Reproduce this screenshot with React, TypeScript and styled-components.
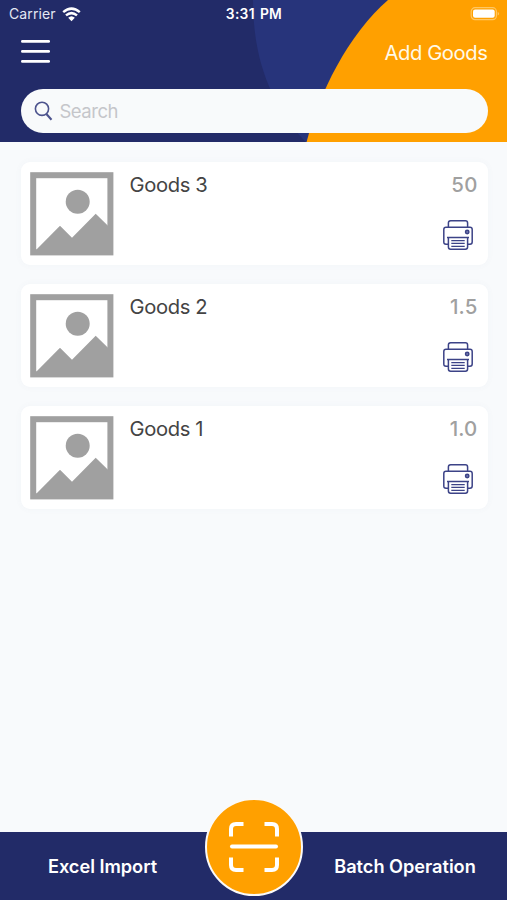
import React from "react";
import styled, { createGlobalStyle } from "styled-components";

const NAVY = "#222b68";
const ORANGE = "#ffa000";

const GlobalStyle = createGlobalStyle`
  * { box-sizing: border-box; }
  body { margin: 0; background: #f8fafc; font-family: Inter, "Liberation Sans", sans-serif; }
  button { font: inherit; border: 0; padding: 0; background: none; color: inherit; display: block; }
`;

const Screen = styled.div`
  width: 507px;
  height: 900px;
  display: flex;
  flex-direction: column;
  background: #f8fafc;
  overflow: hidden;
`;

const Header = styled.header`
  position: relative;
  height: 142.3px;
  flex: none;
  background: ${NAVY};
  color: #fff;
`;

const Backdrop = styled.svg`
  position: absolute;
  inset: 0;
  width: 100%;
  height: 100%;
`;

const HeaderContent = styled.div`
  position: relative;
  display: flex;
  flex-direction: column;
`;

const StatusBar = styled.div`
  height: 28px;
  padding: 0 7px 0 9px;
  display: grid;
  grid-template-columns: 1fr auto 1fr;
  align-items: center;
  font-size: 14px;
  line-height: 28px;
`;

const Carrier = styled.div`
  display: flex;
  align-items: center;
  gap: 6px;
  color: #e4e7f3;
  letter-spacing: 0.12px;
`;

const Clock = styled.div`
  font-weight: 600;
  font-size: 13.8px;
  letter-spacing: 0.3px;
  word-spacing: 1.3px;
  margin-left: -1px;
`;

const Battery = styled.svg`
  justify-self: end;
`;

const TitleBar = styled.div`
  height: 61px;
  padding: 0 19.5px 12px 20.5px;
  display: flex;
  align-items: center;
  justify-content: space-between;
`;

const MenuButton = styled.button`
  margin-top: 1px;
`;

const AddButton = styled.button`
  font-size: 20.2px;
  line-height: 24px;
  letter-spacing: -0.4px;
  color: #fff9e9;
`;

const SearchField = styled.div`
  height: 44px;
  margin: 0 19.5px 0 20.5px;
  padding-left: 13px;
  border-radius: 22px;
  background: #f8fafb;
  display: flex;
  align-items: center;
  gap: 7px;
  color: #c5c6ca;
  font-size: 18.5px;
  letter-spacing: -0.5px;
`;

const GoodsList = styled.main`
  flex: 1;
  padding: 19.5px 19.5px 0 20.5px;
  display: flex;
  flex-direction: column;
  gap: 19.3px;
`;

const Card = styled.article`
  height: 102.8px;
  padding: 10px 10px 10px 9.5px;
  display: flex;
  border-radius: 9px;
  background: #fff;
  box-shadow: 0 0 7px rgba(90, 110, 140, 0.045);
`;

const GoodsName = styled.div`
  margin-left: 15.5px;
  flex: 1;
  font-size: 20.2px;
  line-height: 26px;
  letter-spacing: -0.36px;
  color: #444;
`;

const CardAside = styled.div`
  display: flex;
  flex-direction: column;
  align-items: flex-end;
`;

const Quantity = styled.div`
  font-size: 20.4px;
  line-height: 26px;
  font-weight: 500;
  letter-spacing: 0.2px;
  color: #a0a0a0;
`;

const PrintButton = styled.button`
  margin: 22.5px 5px 0 0;
`;

const Footer = styled.footer`
  height: 68.5px;
  flex: none;
  background: ${NAVY};
  color: #fff;
  display: grid;
  grid-template-columns: 205px 98px 1fr;
  justify-items: center;
`;

const FooterAction = styled.button`
  height: 68px;
  padding-top: 1px;
  font-size: 18.2px;
  font-weight: 600;
  letter-spacing: -0.03px;
`;

const ScanButton = styled.button`
  width: 98px;
  height: 98px;
  margin-top: -34px;
  border: 2px solid #fafafa;
  border-radius: 50%;
  background: ${ORANGE};
  display: grid;
  place-items: center;
`;

const WifiIcon = () => (
  <svg width="19" height="15" viewBox="0 0 19 15" fill="none" stroke="#fff" strokeWidth="2.5">
    <path d="M1.2 5.1Q9.5-1.9 17.8 5.1M4 8.4Q9.5 3.8 15 8.4" />
    <path d="M6.2 10.8Q9.5 7.8 12.8 10.8L9.5 14.2Z" fill="#fff" stroke="none" />
  </svg>
);

const BatteryIcon = () => (
  <Battery width="30" height="14" viewBox="0 0 30 14">
    <rect x="1.2" y="0.7" width="25.2" height="11.9" rx="3.8" fill="none" stroke="#ffc763" strokeWidth="1.2" />
    <rect x="3" y="2.5" width="21.7" height="8.3" rx="2.1" fill="#fff" />
    <path d="M27.7 4.7Q30.5 6.6 27.7 8.6Z" fill="#ffc763" />
  </Battery>
);

const MenuIcon = () => (
  <svg width="29" height="25" viewBox="0 0 29 25" stroke="#fff" strokeWidth="2.8" strokeLinecap="round">
    <path d="M1.4 2.4H27.7M1.4 12.4H27.7M1.4 22.4H27.7" />
  </svg>
);

const SearchIcon = () => (
  <svg width="19" height="20" viewBox="0 0 19 20" fill="none" stroke="#4c538d" strokeWidth="1.6">
    <circle cx="8" cy="7.8" r="6.6" />
    <path d="M12.4 13L17.5 18.8" strokeWidth="2.1" />
  </svg>
);

const Placeholder = () => (
  <svg width="84" height="84" viewBox="0 0 84 84">
    <rect x="3.2" y="3.2" width="77.2" height="77.2" fill="#fff" stroke="#a0a0a0" strokeWidth="6" />
    <circle cx="47.7" cy="29.8" r="12" fill="#a0a0a0" />
    <path d="M5 79L30 53.8L42 65.7L65.7 41.8L79 54.8V82H5Z" fill="#a0a0a0" />
  </svg>
);

const PrinterIcon = () => (
  <svg width="30" height="30" viewBox="0 0 30 30" fill="none" stroke="#3c4387" strokeWidth="1.5" strokeLinejoin="round">
    <path d="M5.4 7.2V3Q5.4.8 7.6.8H22.4Q24.6.8 24.6 3V7.2" />
    <path d="M5.3 24.2H3Q.8 24.2.8 22V9.5Q.8 7.3 3 7.3H27Q29.2 7.3 29.2 9.5V22Q29.2 24.2 27 24.2H24.7" />
    <path d="M4 17.5H26M5.4 17.5V27Q5.4 29.2 7.6 29.2H22.4Q24.6 29.2 24.6 27V17.5" />
    <path d="M8.3 20.5H21.7M8.3 23.4H21.7M8.3 26.3H21.7" strokeWidth="1.25" />
    <circle cx="24.2" cy="12" r="1.7" fill="#737aae" />
  </svg>
);

const ScanIcon = () => (
  <svg width="50" height="52" viewBox="0 0 50 52" fill="none" stroke="#fff" strokeWidth="4">
    <path d="M2 15.5V8Q2 3 7 3H14.5M35.5 3H43Q48 3 48 8V15.5M48 36.5V44Q48 49 43 49H35.5M14.5 49H7Q2 49 2 44V36.5" />
    <path d="M3 25.5H47" strokeLinecap="round" />
  </svg>
);

const goods = [
  { name: "Goods 3", quantity: "50" },
  { name: "Goods 2", quantity: "1.5" },
  { name: "Goods 1", quantity: "1.0" },
];

export default function App() {
  return (
    <>
      <GlobalStyle />
      <Screen>
        <Header>
          <Backdrop viewBox="0 0 507 142.3" preserveAspectRatio="none">
            <path d="M253 0C253 53 267 101 306 142.3H507V0Z" fill="#27347b" />
            <path d="M388 0C348 35 319 93 306.5 142.3H507V0Z" fill={ORANGE} />
          </Backdrop>
          <HeaderContent>
            <StatusBar>
              <Carrier>Carrier <WifiIcon /></Carrier>
              <Clock>3:31 PM</Clock>
              <BatteryIcon />
            </StatusBar>
            <TitleBar>
              <MenuButton aria-label="Menu"><MenuIcon /></MenuButton>
              <AddButton>Add Goods</AddButton>
            </TitleBar>
            <SearchField><SearchIcon />Search</SearchField>
          </HeaderContent>
        </Header>
        <GoodsList>
          {goods.map((item) => (
            <Card key={item.name}>
              <Placeholder />
              <GoodsName>{item.name}</GoodsName>
              <CardAside>
                <Quantity>{item.quantity}</Quantity>
                <PrintButton aria-label="Print"><PrinterIcon /></PrintButton>
              </CardAside>
            </Card>
          ))}
        </GoodsList>
        <Footer>
          <FooterAction>Excel Import</FooterAction>
          <ScanButton aria-label="Scan"><ScanIcon /></ScanButton>
          <FooterAction>Batch Operation</FooterAction>
        </Footer>
      </Screen>
    </>
  );
}
